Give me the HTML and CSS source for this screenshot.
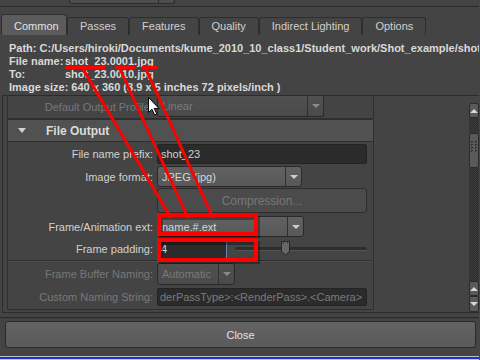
FILE: index.html
```html
<!DOCTYPE html>
<html lang="en">
<head>
<meta charset="utf-8">
<title>Render Settings</title>
<link rel="stylesheet" href="styles.css">
</head>
<body>
<div class="win">
  <div class="topstrip"><div class="topbtn"><span class="tb-main"></span><span class="tb-side"></span></div></div>
  <div class="tabs">
    <div class="tab active">Common</div>
    <div class="tab">Passes</div>
    <div class="tab">Features</div>
    <div class="tab">Quality</div>
    <div class="tab">Indirect Lighting</div>
    <div class="tab">Options</div>
  </div>
  <div class="panel">
    <div class="info">
      <div class="ln">Path: C:/Users/hiroki/Documents/kume_2010_10_class1/Student_work/Shot_example/shot_23</div>
      <div class="ln"><span class="key">File name:</span>shot_23.0001.jpg</div>
      <div class="ln"><span class="key">To:</span>shot_23.0010.jpg</div>
      <div class="ln">Image size: 640 x 360 (8.9 x 5 inches 72 pixels/inch )</div>
    </div>
    <div class="scroll">
      <div class="view">
        <div class="frame cm">
          <div class="row r-cm">
            <span class="lbl dis">Default Output Profile:</span>
            <div class="dd cut dis w167"><span class="dd-txt">Linear</span><span class="dd-arr"></span></div>
          </div>
        </div>
        <div class="frame fo">
          <div class="hdr"><span class="tri"></span>File Output</div>
          <div class="body">
            <div class="row r-prefix"><span class="lbl">File name prefix:</span><div class="field">shot_23</div></div>
            <div class="row r-format"><span class="lbl">Image format:</span><div class="dd w145"><span class="dd-txt">JPEG (jpg)</span><span class="dd-arr"></span></div></div>
            <div class="row r-comp"><span></span><div class="btn dis">Compression...</div></div>
            <div class="row r-ext"><span class="lbl">Frame/Animation ext:</span><div class="dd w147"><span class="dd-txt">name.#.ext</span><span class="dd-arr"></span></div></div>
            <div class="row r-pad"><span class="lbl">Frame padding:</span>
              <div class="padctl">
                <div class="field num focus">4</div>
                <div class="slider">
                  <div class="groove"></div>
                  <svg class="handle" style="left:45px" width="11" height="16" viewBox="0 0 11 16"><path d="M1.5 1.5h8v10l-4 3.5-4-3.5z" fill="#676767" stroke="#252525"/><path d="M3 3h1M7 3h1" stroke="#2a2a2a"/></svg>
                </div>
              </div>
            </div>
            <div class="sep"></div>
            <div class="row r-fbn"><span class="lbl dis">Frame Buffer Naming:</span><div class="dd w78 dis"><span class="dd-txt">Automatic</span><span class="dd-arr"></span></div></div>
            <div class="row r-cns"><span class="lbl dis">Custom Naming String:</span><div class="field dis">derPassType&gt;:&lt;RenderPass&gt;.&lt;Camera&gt;</div></div>
          </div>
        </div>
      </div>
      <div class="sbar">
        <div class="sb-btn up"><span class="sb-up"></span></div>
        <div class="sb-track short"></div>
        <div class="sb-thumb">
          <svg width="8" height="14" viewBox="0 0 8 14"><g fill="#333"><rect x="1" y="1" width="2" height="1"/><rect x="5" y="1" width="2" height="1"/><rect x="1" y="4" width="2" height="1"/><rect x="5" y="4" width="2" height="1"/><rect x="1" y="7" width="2" height="1"/><rect x="5" y="7" width="2" height="1"/><rect x="1" y="10" width="2" height="1"/><rect x="5" y="10" width="2" height="1"/></g><g fill="#333"><rect x="1" y="2" width="1" height="1"/><rect x="5" y="2" width="1" height="1"/><rect x="1" y="5" width="1" height="1"/><rect x="5" y="5" width="1" height="1"/><rect x="1" y="8" width="1" height="1"/><rect x="5" y="8" width="1" height="1"/><rect x="1" y="11" width="1" height="1"/><rect x="5" y="11" width="1" height="1"/></g></svg>
        </div>
        <div class="sb-track fill"></div>
        <div class="sb-btn up"><span class="sb-up"></span></div>
        <div class="sb-btn down"><span class="sb-down"></span></div>
      </div>
    </div>
  </div>
  <div class="closebar">
    <div class="groove-line"></div>
    <div class="closebtn">Close</div>
  </div>
  <div class="taskedge"></div>
</div>
<svg class="overlay" width="480" height="360" viewBox="0 0 480 360">
  <g fill="none" stroke="#000" stroke-opacity="0.35" stroke-width="4">
    <rect x="161" y="218" width="97" height="18"/>
    <rect x="161" y="243" width="97" height="19"/>
  </g>
  <g stroke="#ff0000" stroke-width="3" fill="none">
    <path d="M65 67.5H105M115 67.5H135M142 67.5H158"/>
    <path d="M83 69L171 218M120 69L188 218M146 69L213 218"/>
  </g>
  <g fill="none" stroke="#ff0000" stroke-width="4">
    <rect x="159" y="215" width="97" height="19"/>
    <rect x="159" y="240" width="97" height="20"/>
  </g>
  <path d="M148.5 97.5v15l3.5-3.3 2.6 5.8 2.2-1-2.6-5.6h4.8z" fill="#fff" stroke="#000" stroke-width="1" stroke-linejoin="round"/>
</svg>
</body>
</html>
```

FILE: styles.css
```css
* { box-sizing: border-box; margin: 0; padding: 0; }
html, body { width: 480px; height: 360px; overflow: hidden; background: #444444; }
body {
  font-family: "Liberation Sans", Arial, sans-serif;
  font-size: 11px;
  color: #d2d2d2;
  position: relative;
}
.win {
  width: 480px;
  height: 360px;
  display: flex;
  flex-direction: column;
  border-right: 1px solid #2a36e0;
}

/* top strip */
.topstrip {
  height: 7px;
  border-bottom: 1px solid #2a2a2a;
  flex: none;
}
.topbtn {
  margin-left: 69px;
  width: 106px;
  height: 4px;
  display: flex;
  border: 1px solid #2c2c2c;
  border-top: none;
  border-radius: 0 0 3px 3px;
  background: #4e4e4e;
}
.tb-main { width: 89px; border-right: 1px solid #2c2c2c; }
.tb-side { flex: 1; }

/* tabs */
.tabs {
  height: 28px;
  flex: none;
  display: flex;
  align-items: flex-end;
  padding-left: 1px;
}
.tab {
  height: 18px;
  line-height: 17px;
  padding: 0 12px;
  border: 1px solid #2e2e2e;
  border-bottom: none;
  border-radius: 3px 3px 0 0;
  color: #d0d0d0;
  background: #444;
  white-space: nowrap;
}
.tab.active {
  height: 21px;
  padding-top: 3px;
  background: #5b5b5b;
  color: #e2e2e2;
  width: 66px;
  text-align: center;
}

/* panel */
.panel { flex: none; display: flex; flex-direction: column; }
.info {
  height: 60px;
  padding: 7px 0 0 9px;
  font-weight: bold;
  color: #d9d9d9;
  line-height: 13px;
  white-space: nowrap;
  overflow: hidden;
}
.key { display: inline-block; width: 56px; }

.scroll {
  height: 218px;
  margin-left: 2px;
  border: 1px solid #2c2c2c;
  border-right: none;
  display: flex;
}
.view {
  flex: 1;
  padding-left: 4px;
  overflow: hidden;
}
.frame { width: 367px; }
.frame.cm {
  height: 23px;
  border: 1px solid #2f2f2f;
  border-top: none;
}
.fo { margin-top: 0; }
.hdr {
  height: 23px;
  border: 1px solid #2f2f2f;
  border-radius: 2px 2px 0 0;
  background: #515151;
  font-weight: bold;
  font-size: 12px;
  color: #dcdcdc;
  display: flex;
  align-items: center;
  padding-left: 10px;
}
.tri {
  width: 0; height: 0;
  border-left: 4px solid transparent;
  border-right: 4px solid transparent;
  border-top: 5px solid #d0d0d0;
  margin-right: 20px;
}
.body {
  height: 168px;
  border: 1px solid #2f2f2f;
  border-top: none;
  padding-top: 2px;
}

.row {
  display: grid;
  grid-template-columns: 145px 1fr;
  column-gap: 4px;
  align-items: center;
  padding-right: 6px;
}
.lbl { text-align: right; white-space: nowrap; color: #d2d2d2; }
.dis { color: #787878; }

.r-cm { height: 21px; padding-left: 0; }
.r-prefix { height: 20px; }
.r-format { height: 21px; margin-top: 2px; }
.r-comp { height: 25px; margin-top: 1px; }
.r-ext { height: 21px; margin-top: 3px; }
.r-pad { height: 20px; margin-top: 2px; }
.r-fbn { height: 22px; margin-top: 1px; }
.r-cns { height: 18px; margin-top: 3px; }

.sep {
  margin-top: 1px;
  height: 2px;
  border-top: 1px solid #2e2e2e;
  border-bottom: 1px solid #4d4d4d;
}

.field {
  height: 100%;
  background: #2b2b2b;
  border: 1px solid #232323;
  border-radius: 2px;
  padding-left: 3px;
  display: flex;
  align-items: center;
  white-space: nowrap;
  overflow: hidden;
  color: #cfcfcf;
}
.field.dis { color: #7a7a7a; padding-left: 2px; }
.field.num { width: 70px; }
.field.focus { border-right-color: #6a88ad; }

.dd {
  height: 100%;
  display: flex;
  border: 1px solid #2a2a2a;
  border-radius: 3px;
  background: linear-gradient(#616161, #585858);
  color: #d6d6d6;
}
.dd.dis { background: linear-gradient(#505050, #4a4a4a); color: #7a7a7a; }
.dd.cut { border-top: none; border-radius: 0 0 3px 3px; height: 21px; }
.w167 { width: 167px; }
.w145 { width: 145px; }
.w147 { width: 147px; }
.w78 { width: 78px; }
.dd-txt { flex: 1; padding-left: 4px; display: flex; align-items: center; white-space: nowrap; }
.dd-arr {
  width: 16px;
  border-left: 1px solid #303030;
  display: flex;
  align-items: center;
  justify-content: center;
}
.dd-arr::after {
  content: "";
  border-left: 4px solid transparent;
  border-right: 4px solid transparent;
  border-top: 4px solid #cfcfcf;
}
.dd.dis .dd-arr::after { border-top-color: #8a8a8a; }

.btn {
  height: 100%;
  border: 1px solid #2c2c2c;
  border-radius: 3px;
  background: #4b4b4b;
  display: flex;
  align-items: center;
  justify-content: center;
  font-size: 12px;
}

.padctl { display: flex; height: 100%; gap: 8px; }
.slider { position: relative; flex: 1; display: flex; align-items: center; }
.groove {
  width: 100%;
  height: 4px;
  background: #2d2d2d;
  border-bottom: 1px solid #555;
  border-radius: 2px;
}
.handle { position: absolute; top: 1px; }

/* scrollbar */
.sbar {
  width: 10px;
  margin-top: 7px;
  display: flex;
  flex-direction: column;
}
.sb-btn {
  height: 15px;
  background: #5a5a5a;
  border: 1px solid #2b2b2b;
  border-radius: 2px;
  display: flex;
  align-items: center;
  justify-content: center;
}
.sb-btn.down { height: 16px; }
.sb-up, .sb-down { width: 0; height: 0; border-left: 4px solid transparent; border-right: 4px solid transparent; }
.sb-up { border-bottom: 4px solid #d8d8d8; }
.sb-down { border-top: 4px solid #d8d8d8; }
.sb-track {
  background: repeating-conic-gradient(#3b3b3b 0 25%, #2f2f2f 0 50%) 0 0 / 2px 2px;
}
.sb-track.short { height: 15px; }
.sb-track.fill { flex: 1; }
.sb-thumb {
  height: 35px;
  background: #5a5a5a;
  border: 1px solid #2b2b2b;
  border-radius: 2px;
  display: flex;
  justify-content: center;
  padding-top: 6px;
}

/* close */
.closebar { height: 43px; flex: none; padding-top: 4px; }
.groove-line { height: 2px; border-top: 1px solid #2b2b2b; border-bottom: 1px solid #3d3d3d; }
.closebtn {
  margin: 2px 3px 0 5px;
  height: 27px;
  border: 1px solid #2a2a2a;
  border-radius: 3px;
  background: linear-gradient(#636363, #5a5a5a);
  color: #e0e0e0;
  display: flex;
  align-items: center;
  justify-content: center;
}
.taskedge {
  height: 4px;
  flex: none;
  border-top: 1px solid #bdbdbd;
  border-bottom: 1px solid #c8c8c8;
  background: #1c30d6;
}

.overlay { position: absolute; left: 0; top: 0; pointer-events: none; }
```
